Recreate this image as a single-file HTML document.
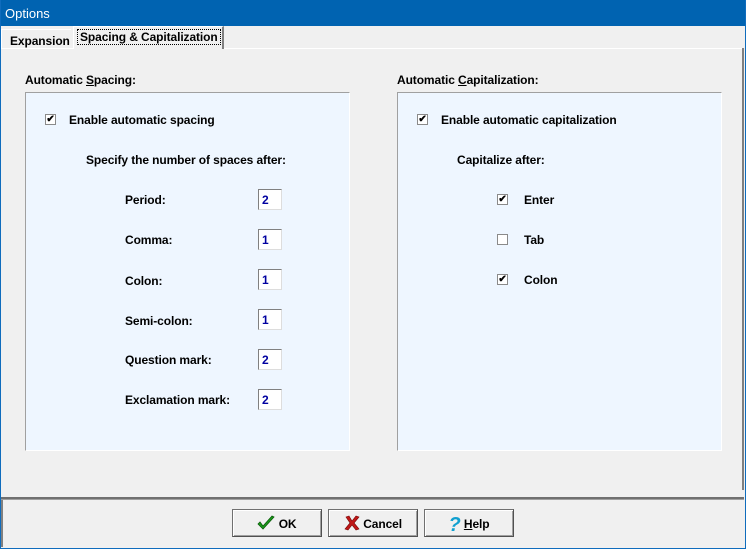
<!DOCTYPE html>
<html><head><style>
*{margin:0;padding:0;box-sizing:border-box}
body{width:746px;height:549px;background:#f0f0f0;font-family:"Liberation Sans",Arial,sans-serif;font-size:12px;font-weight:bold;color:#000;position:relative;overflow:hidden;letter-spacing:-0.1px}
.a{position:absolute}
.title{left:0;top:0;width:746px;height:26px;background:#0063b1;color:#fff;font-weight:normal;font-size:13px;padding:6px 0 0 5px;letter-spacing:0}
.box{background:#eef6ff;border-top:1px solid #a0a0a0;border-left:1px solid #a0a0a0;border-right:1px solid #fff;border-bottom:1px solid #fff}
.cb{width:11px;height:11px;border:1px solid #8a8a8a;background:#fff;font-size:10px;line-height:9px;text-align:center}
.tb{width:24px;height:21px;background:#fff;border-top:1px solid #808080;border-left:1px solid #808080;border-right:1px solid #ddd;border-bottom:1px solid #ddd;color:#0000a0;padding:3px 0 0 3px}
.btn{top:509px;height:28px;width:90px;border:1px solid #707070;border-right-color:#505050;border-bottom-color:#505050;box-shadow:inset 1px 1px #fff, inset -1px -1px #a0a0a0;background:#f0f0f0;text-align:center;line-height:28px}
</style></head><body>
<div class="a title">Options</div>
<div class="a" style="left:1px;top:29px;width:70px;height:20px;border-top:1px solid #fff;border-left:1px solid #fff;padding:4px 0 0 8px">Expansion</div>
<div class="a" style="left:73px;top:26px;width:151px;height:23px;border-top:1px solid #fff;border-left:1px solid #fff;border-right:2px solid #808080;background:#f0f0f0;padding:3px 0 0 4px"><span style="outline:1px dotted #000;padding:0 2px">Spacing &amp; Capitalization</span></div>
<div class="a" style="left:1px;top:48px;width:72px;height:1px;background:#fff"></div>
<div class="a" style="left:224px;top:48px;width:519px;height:1px;background:#fff"></div>
<div class="a" style="left:742px;top:48px;width:2px;height:442px;background:#808080"></div>
<div class="a" style="left:1px;top:497px;width:743px;height:3px;border-top:2px solid #707070;border-bottom:1px solid #a0a0a0"></div>
<div class="a" style="left:1px;top:500px;width:2px;height:47px;background:#808080"></div>
<div class="a" style="left:0;top:0;width:746px;height:549px;border:1px solid #0f6cbd;border-top:none"></div>

<div class="a" style="left:25px;top:73px">Automatic <u>S</u>pacing:</div>
<div class="a box" style="left:25px;top:92px;width:325px;height:359px"></div>
<div class="a" style="left:397px;top:73px">Automatic <u>C</u>apitalization:</div>
<div class="a box" style="left:397px;top:92px;width:325px;height:359px"></div>

<div class="a cb" style="left:45px;top:114px">✔</div>
<div class="a" style="left:69px;top:113px">Enable automatic spacing</div>
<div class="a" style="left:86px;top:153px">Specify the number of spaces after:</div>
<div class="a" style="left:125px;top:193px">Period:</div><div class="a tb" style="left:258px;top:189px">2</div>
<div class="a" style="left:125px;top:233px">Comma:</div><div class="a tb" style="left:258px;top:229px">1</div>
<div class="a" style="left:125px;top:274px">Colon:</div><div class="a tb" style="left:258px;top:269px">1</div>
<div class="a" style="left:125px;top:314px">Semi-colon:</div><div class="a tb" style="left:258px;top:309px">1</div>
<div class="a" style="left:125px;top:353px">Question mark:</div><div class="a tb" style="left:258px;top:349px">2</div>
<div class="a" style="left:125px;top:393px">Exclamation mark:</div><div class="a tb" style="left:258px;top:389px">2</div>

<div class="a cb" style="left:417px;top:114px">✔</div>
<div class="a" style="left:441px;top:113px">Enable automatic capitalization</div>
<div class="a" style="left:457px;top:153px">Capitalize after:</div>
<div class="a cb" style="left:497px;top:194px">✔</div><div class="a" style="left:524px;top:193px">Enter</div>
<div class="a cb" style="left:497px;top:234px"></div><div class="a" style="left:524px;top:233px">Tab</div>
<div class="a cb" style="left:497px;top:274px">✔</div><div class="a" style="left:524px;top:273px">Colon</div>

<div class="a btn" style="left:232px"><svg width="18" height="16" viewBox="0 0 18 16" style="vertical-align:-3px"><path d="M1 9 L6 14 L17 2 L15 1 L6 11 L3 7 Z" fill="#1a9a1a" stroke="#0a5a0a" stroke-width="0.8"/></svg> OK</div>
<div class="a btn" style="left:328px"><svg width="16" height="16" viewBox="0 0 16 16" style="vertical-align:-3px"><path d="M2 2 L5 1 L8 6 L12 1 L15 2 L10 8 L15 14 L12 15 L8 10 L4 15 L1 14 L6 8 Z" fill="#c01818" stroke="#700" stroke-width="0.6"/></svg> Cancel</div>
<div class="a btn" style="left:424px"><span style="color:#10a0d0;font-size:20px;font-style:italic;vertical-align:-3px">?</span> <u>H</u>elp</div>
</body></html>
